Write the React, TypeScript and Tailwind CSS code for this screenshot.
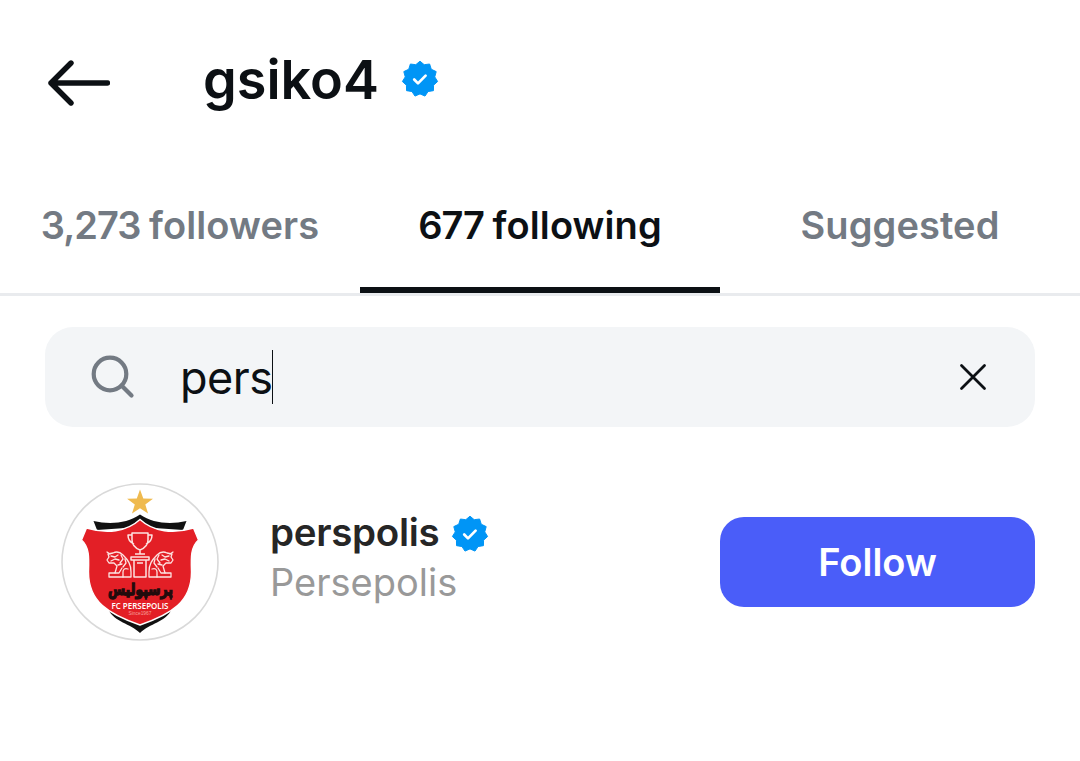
import React, { useState } from "react";

const badgePoints = Array.from({ length: 22 }, (_, i) => {
  const r = i % 2 === 0 ? 17.8 : 14.9;
  const a = (Math.PI * i) / 11 - Math.PI / 2;
  return `${(19 + r * Math.cos(a)).toFixed(2)},${(19 + r * Math.sin(a)).toFixed(2)}`;
}).join(" ");

const VerifiedBadge = () => (
  <svg width="38" height="38" viewBox="0 0 38 38" className="shrink-0">
    <polygon points={badgePoints} fill="#0095f6" stroke="#0095f6" strokeLinejoin="round" />
    <path d="M13.200 19.500l3.800 3.900 7.600-7.800" fill="none" stroke="#fff" strokeWidth="2.7" strokeLinecap="round" strokeLinejoin="round" />
  </svg>
);

// one lion of the crest, the other is the same one mirrored
const Lion = () => (
  <g fill="none" stroke="#fde3e1" strokeWidth="1.3" strokeLinejoin="round" strokeLinecap="round">
    <path d="M48 94h22v-5c0-8-3-12-8-17-3-3-6-4-10-2l-5 1 1 3-2 3 2 3h5l3 3-2 7h-6z" />
    <path d="M50 73l4 1 3-2M50 78l4-2 4 1M60 72l2 4-3 4M57 82l4-1M54 90h4l3-5M62 94v-5c0-3 2-4 5-3" />
    <path d="M46 69l3 2M64 76l1 4-3 4" />
  </g>
);

const ClubLogo = () => (
  <svg width="158" height="158" viewBox="0 0 158 158" className="shrink-0">
    <circle cx="79" cy="79" r="78" fill="#fff" stroke="#d9d9d9" strokeWidth="1.6" />
    <path d="M79 6.500l3.300 9 9.700.2-7.700 5.800 2.800 9.100-8.100-5.400-8 5.400 2.800-9.100-7.700-5.800 9.700-.2z" fill="#efba4f" />
    <path d="M32.500 38c17 4 34 2 46.500-6.500 12.500 8.500 29.500 10.500 46.500 6.500l-3.500 9-43-3-43 3z" fill="#111" />
    <path d="M47 126c7 14 22 14 32 24 10-10 25-10 32-24l-32 8z" fill="#111" />
    <path
      d="M25.500 45c20 6 40 4 53.500-8.500 13.500 12.500 33.500 14.500 53.500 8.500l5 12c-8 7-7.500 18-7 32 0 30-20 42-51.500 53C47.500 131 27.500 119 27.500 89c.500-14 1-25-7-32z"
      fill="#e31f26"
      stroke="#fff"
      strokeWidth="1.4"
    />
    <g fill="none" stroke="#fde3e1" strokeWidth="1.5" strokeLinejoin="round">
      <path d="M71 50h16v7c0 5-3 8-8 10-5-2-8-5-8-10zM71 52h-4c0 6 3 7 6 9M87 52h4c0 6-3 7-6 9M79 67v4M74 71h10" />
      <path d="M70 74h18v3H70zM73 77h12v17H73zM76 80h6" />
    </g>
    <Lion />
    <g transform="translate(158 0) scale(-1 1)">
      <Lion />
    </g>
    <text
      x="79.500"
      y="112"
      textAnchor="middle"
      textLength="65"
      lengthAdjust="spacingAndGlyphs"
      fill="#210b0c"
      stroke="#210b0c"
      strokeWidth="1.3"
      className="font-['DejaVu_Sans',sans-serif] text-[16px] font-bold"
    >
      پرسپولیس
    </text>
    <text
      x="79"
      y="125.500"
      textAnchor="middle"
      textLength="57"
      lengthAdjust="spacingAndGlyphs"
      fill="#fff"
      className="font-['Open_Sans',sans-serif] text-[8.5px] font-semibold"
    >
      FC PERSEPOLIS
    </text>
    <text x="79" y="132" textAnchor="middle" textLength="23" lengthAdjust="spacingAndGlyphs" fill="#f5a09d" className="font-['Liberation_Sans',sans-serif] text-[5px]">
      Since1967
    </text>
  </svg>
);

const tabs = [
  { id: "followers", count: "3,273", label: "followers" },
  { id: "following", count: "677", label: "following" },
  { id: "suggested", label: "Suggested" },
];

const App = () => {
  const [activeTab, setActiveTab] = useState("following");
  const [search, setSearch] = useState("pers");

  return (
    <div className="min-h-[761px] w-[1080px] bg-white font-[Inter,sans-serif] text-[#0c1014]">
      {/* Header */}
      <header className="flex h-40 items-center pl-[46px]">
        <button aria-label="Back" className="mt-[6px]">
          <svg width="64" height="48" viewBox="0 0 64 48" fill="none" stroke="#0c1014" strokeWidth="5.4" strokeLinecap="round" strokeLinejoin="round">
            <path d="M25 4L5 24l20 20M5 24h56.500" />
          </svg>
        </button>
        <h1 className="-mt-[2px] ml-[93px] w-[198px] text-[54px] font-semibold whitespace-nowrap">gsiko4</h1>
        <div className="-mt-[3px]">
          <VerifiedBadge />
        </div>
      </header>

      {/* Tabs */}
      <nav className="grid h-[136px] grid-cols-3 border-b-[3px] border-[#e9ebee]">
        {tabs.map((tab) => (
          <button
            key={tab.id}
            onClick={() => setActiveTab(tab.id)}
            className={`border-b-[6px] pt-1 text-[38px] font-semibold tracking-[0.1px] whitespace-nowrap ${
              activeTab === tab.id ? "border-[#0c1014] text-[#0c1014]" : "border-transparent text-[#737a83]"
            }`}
          >
            {tab.count && <span className="tracking-[-1px]">{tab.count} </span>}
            {tab.label}
          </button>
        ))}
      </nav>

      {/* Search */}
      <div className="mx-[45px] mt-[31px] flex h-[100px] items-center rounded-[28px] bg-[#f3f5f7] pr-[46px] pl-[45px]">
        <svg width="46" height="46" viewBox="0 0 46 46" fill="none" stroke="#737a83" strokeWidth="4.2" strokeLinecap="round">
          <circle cx="20" cy="20" r="16.300" />
          <path d="M31.500 31.500L41.500 41.500" />
        </svg>
        <div className="ml-[44px] flex flex-1 items-center">
          <span className="pt-px text-[45px] tracking-[-0.5px]">{search}</span>
          <span className="h-[54px] w-px bg-[#0c1014]" />
        </div>
        <button aria-label="Clear" onClick={() => setSearch("")}>
          <svg width="32" height="32" viewBox="0 0 32 32" stroke="#0c1014" strokeWidth="2.8" strokeLinecap="round">
            <path d="M4.500 4.500l23 23M27.500 4.500l-23 23" />
          </svg>
        </button>
      </div>

      {/* Result */}
      <div className="mt-[56px] flex h-[158px] items-center pr-[45px] pl-[61px]">
        <ClubLogo />
        <div className="-mt-[9px] ml-[51px] flex-1">
          <div className="flex h-[50px] items-center">
            <span className="w-[181px] text-[38.5px] font-semibold tracking-[-0.3px] text-[#262626]">perspolis</span>
            <div className="mt-px">
              <VerifiedBadge />
            </div>
          </div>
          <div className="-mt-px h-[50px] text-[38px] leading-[50px] text-[#999]">Persepolis</div>
        </div>
        <button className="h-[90px] w-[315px] rounded-[24px] bg-[#4a5df9] text-[38px] font-semibold text-white">Follow</button>
      </div>
    </div>
  );
};

export default App;
